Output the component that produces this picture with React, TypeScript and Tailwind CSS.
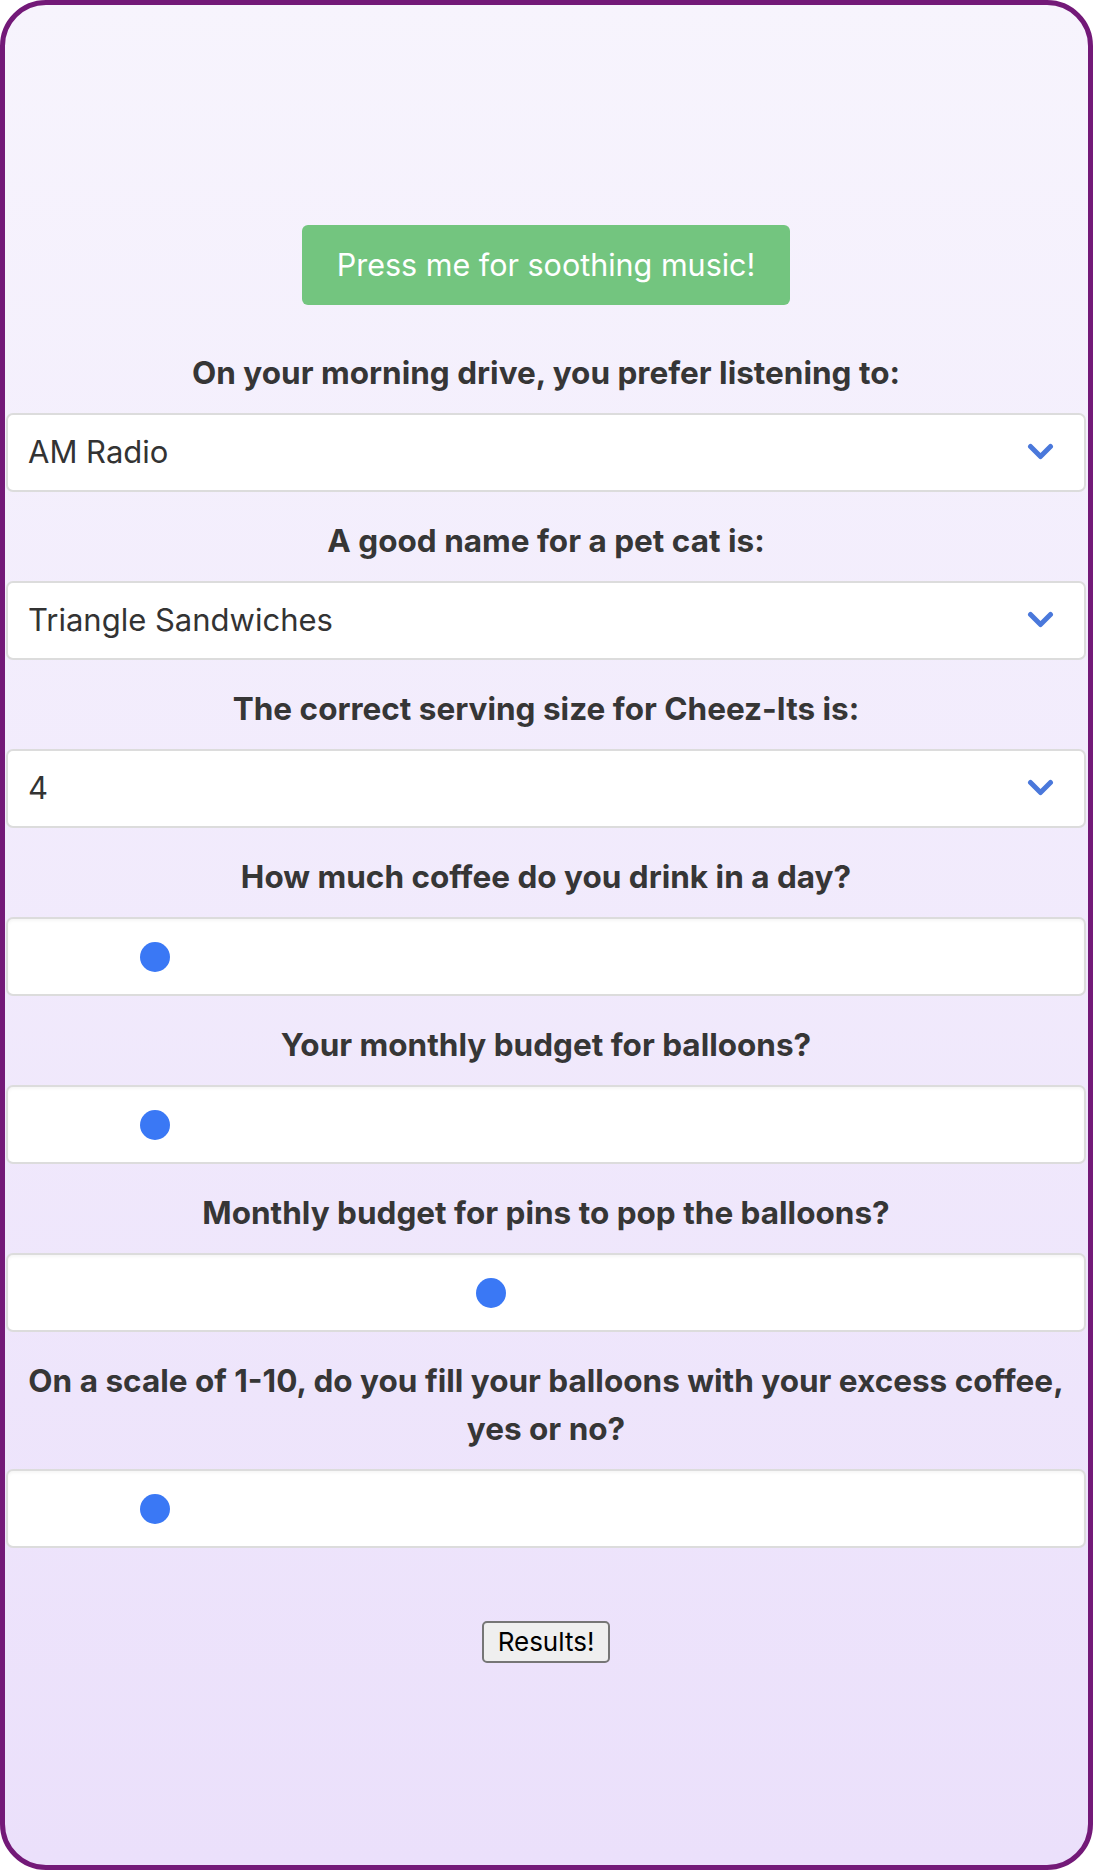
import { useState } from "react";

const font = { fontFamily: "Inter, 'Noto Sans', sans-serif" };

function Chevron() {
  return (
    <svg width="27" height="19" viewBox="0 0 27 19" className="pointer-events-none absolute right-[32px] top-[30px]">
      <path d="M3.5 3.5 L13.5 13.5 L23.5 3.5" fill="none" stroke="#4a78db" strokeWidth="5" strokeLinecap="round" strokeLinejoin="round" />
    </svg>
  );
}

function Question({ text }: { text: string }) {
  return (
    <label className="block text-center text-[31.5px] leading-[48px] font-bold text-[#363636] px-4 mt-[25px] mb-[16px]">
      {text}
    </label>
  );
}

function Choice({ options, value }: { options: string[]; value: string }) {
  const [v, setV] = useState(value);
  return (
    <div className="relative">
      <select
        value={v}
        onChange={(e) => setV(e.target.value)}
        className="appearance-none w-full h-[79px] bg-white border-2 border-[#dcdcdc] rounded-[7px] pl-[20px] text-[31px] text-[#333] outline-none"
        style={font}
      >
        {options.map((o) => (
          <option key={o}>{o}</option>
        ))}
      </select>
      <Chevron />
    </div>
  );
}

function Slider({ value }: { value: number }) {
  const [v, setV] = useState(value);
  return (
    <div className="h-[79px] bg-white border-2 border-[#dcdcdc] rounded-[7px] flex items-center shadow-[inset_0_2px_3px_rgba(0,0,0,0.04)]">
      <input
        type="range"
        min={0}
        max={100}
        value={v}
        onChange={(e) => setV(Number(e.target.value))}
        className="ml-[132px] w-[702px] h-[30px] appearance-none bg-transparent outline-none [&::-webkit-slider-runnable-track]:bg-transparent [&::-webkit-slider-runnable-track]:h-[30px] [&::-webkit-slider-thumb]:appearance-none [&::-webkit-slider-thumb]:w-[30px] [&::-webkit-slider-thumb]:h-[30px] [&::-webkit-slider-thumb]:rounded-full [&::-webkit-slider-thumb]:bg-[#3a78f5] [&::-moz-range-thumb]:w-[30px] [&::-moz-range-thumb]:h-[30px] [&::-moz-range-thumb]:rounded-full [&::-moz-range-thumb]:border-0 [&::-moz-range-thumb]:bg-[#3a78f5]"
      />
    </div>
  );
}

export default function App() {
  return (
    <div
      className="w-[1093px] h-[1870px] border-[5px] border-[#731978] rounded-[46px] bg-gradient-to-b from-[#f7f4fd] to-[#ebe0fb] overflow-hidden"
      style={font}
    >
      <div className="pl-[1px] pr-[2px] pt-[220px]">
        <div className="flex justify-center mb-[44px]">
          <button className="w-[488px] h-[80px] bg-[#73c57f] rounded-[6px] text-white text-[30.5px]">
            Press me for soothing music!
          </button>
        </div>

        <Question text="On your morning drive, you prefer listening to:" />
        <Choice options={["AM Radio", "FM Radio", "Podcasts", "Silence"]} value="AM Radio" />

        <Question text="A good name for a pet cat is:" />
        <Choice options={["Triangle Sandwiches", "Mr. Whiskers", "Cat"]} value="Triangle Sandwiches" />

        <Question text="The correct serving size for Cheez-Its is:" />
        <Choice options={["4", "27", "The whole box"]} value="4" />

        <Question text="How much coffee do you drink in a day?" />
        <Slider value={0} />

        <Question text="Your monthly budget for balloons?" />
        <Slider value={0} />

        <Question text="Monthly budget for pins to pop the balloons?" />
        <Slider value={50} />

        <Question text="On a scale of 1-10, do you fill your balloons with your excess coffee, yes or no?" />
        <Slider value={0} />

        <div className="flex justify-center mt-[73px]">
          <button className="w-[128px] h-[42px] bg-[#efefef] border-2 border-[#767676] rounded-[5px] text-[26px] text-black leading-none">
            Results!
          </button>
        </div>
      </div>
    </div>
  );
}
